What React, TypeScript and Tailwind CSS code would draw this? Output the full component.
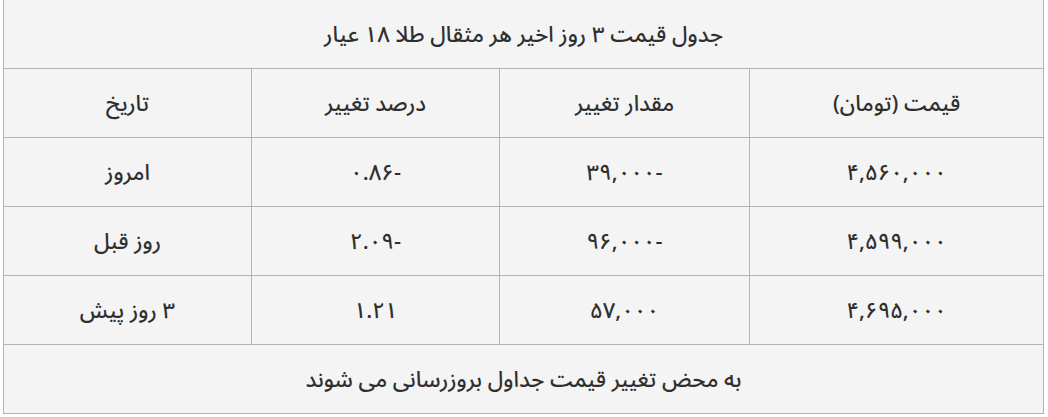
export default function App() {
  const rows = [
    { price: '۴,۵۶۰,۰۰۰', change: '-۳۹,۰۰۰', percent: '-۰.۸۶', date: 'امروز' },
    { price: '۴,۵۹۹,۰۰۰', change: '-۹۶,۰۰۰', percent: '-۲.۰۹', date: 'روز قبل' },
    { price: '۴,۶۹۵,۰۰۰', change: '۵۷,۰۰۰', percent: '۱.۲۱', date: '۳ روز پیش' },
  ]
  const cell = 'border border-[#b3b3b3] h-[69px] p-0 pt-[3px] text-center align-middle'

  return (
    <div className="w-[1048px] h-[417px] bg-white overflow-hidden">
      <table
        dir="rtl"
        className="ml-[3px] -mt-px w-[1040px] table-fixed border-collapse bg-[#f4f4f4] text-[#2f2f2f] text-[22px] font-medium font-['Noto_Sans_Arabic','Noto_Sans','DejaVu_Sans',sans-serif]"
      >
        <colgroup>
          <col className="w-[294px]" />
          <col className="w-[250px]" />
          <col className="w-[248px]" />
          <col className="w-[248px]" />
        </colgroup>
        <tbody>
          <tr>
            <td colSpan={4} className={cell}>
              جدول قیمت ۳ روز اخیر هر مثقال طلا ۱۸ عیار
            </td>
          </tr>
          <tr>
            <td className={cell}>قیمت (تومان)</td>
            <td className={cell}>مقدار تغییر</td>
            <td className={cell}>درصد تغییر</td>
            <td className={cell}>تاریخ</td>
          </tr>
          {rows.map((r) => (
            <tr key={r.date}>
              <td className={cell}>{r.price}</td>
              <td className={cell}>{r.change}</td>
              <td className={cell}>{r.percent}</td>
              <td className={cell}>{r.date}</td>
            </tr>
          ))}
          <tr>
            <td colSpan={4} className={cell}>
              به محض تغییر قیمت جداول بروزرسانی می شوند
            </td>
          </tr>
        </tbody>
      </table>
    </div>
  )
}
